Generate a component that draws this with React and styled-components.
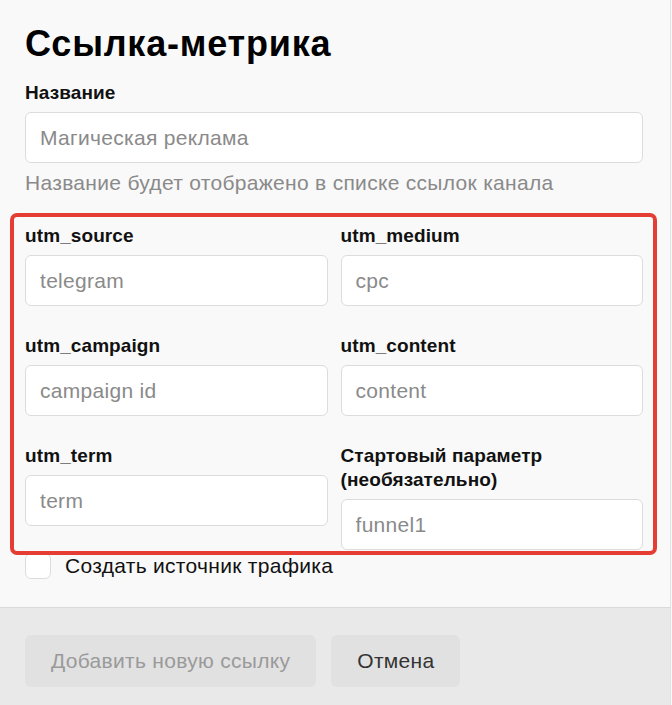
import styled, { createGlobalStyle } from "styled-components";

const GlobalStyle = createGlobalStyle`
  html, body {
    margin: 0;
    padding: 0;
    background: #f9f9f9;
  }
  body {
    font-family: "Liberation Sans", Arial, sans-serif;
    color: #111;
  }
`;

const Panel = styled.div`
  width: 671px;
  min-height: 705px;
  box-sizing: border-box;
  border-right: 1px solid #e2e2e2;
  background: #f9f9f9;
  display: flex;
  flex-direction: column;
`;

const Body = styled.div`
  padding: 23px 27px 28px 25px;
  display: flex;
  flex-direction: column;
`;

const Title = styled.h1`
  margin: 0 0 16px;
  font-size: 36px;
  line-height: 42px;
  letter-spacing: 0.8px;
  font-weight: bold;
  color: #000;
`;

const Field = styled.label`
  display: flex;
  flex-direction: column;
  min-width: 0;
`;

const Label = styled.span`
  font-size: 19px;
  line-height: 24px;
  letter-spacing: 0.1px;
  font-weight: bold;
  color: #111;
  margin-bottom: 7px;
`;

const Input = styled.input`
  height: 51px;
  box-sizing: border-box;
  width: 100%;
  border: 1px solid #dcdcdc;
  border-radius: 6px;
  background: #fff;
  padding: 0 14px;
  font-family: inherit;
  font-size: 21px;
  letter-spacing: 0.3px;
  color: #222;
  outline: none;

  &::placeholder {
    color: #8a8a8a;
  }
`;

const Hint = styled.p`
  margin: 8px 0 0;
  font-size: 21px;
  line-height: 24px;
  letter-spacing: 0.3px;
  color: #8a8a8a;
`;

const UtmGrid = styled.div`
  position: relative;
  margin-top: 29px;
  display: grid;
  grid-template-columns: 1fr 1fr;
  column-gap: 13px;
  row-gap: 28px;
  align-items: start;

  &::after {
    content: "";
    position: absolute;
    left: -15px;
    right: -14px;
    top: -11px;
    bottom: -5px;
    border: 4px solid #e53d33;
    border-radius: 7px;
    pointer-events: none;
  }
`;

const CheckRow = styled.label`
  margin-top: 3px;
  display: flex;
  align-items: center;
  gap: 14px;
  font-size: 21px;
  line-height: 26px;
  letter-spacing: 0.3px;
  color: #111;
`;

const Check = styled.span`
  width: 26px;
  height: 26px;
  box-sizing: border-box;
  border: 1px solid #dcdcdc;
  border-radius: 6px;
  background: #fff;
`;

const Footer = styled.div`
  flex: 1;
  border-top: 1px solid #dadada;
  background: #e9e9e9;
  padding: 27px 25px;
  display: flex;
  align-items: flex-start;
  gap: 15px;
`;

const Button = styled.button`
  height: 52px;
  padding: 0 26px;
  border: none;
  border-radius: 6px;
  background: #e1e1e1;
  color: ${(p) => (p.disabled ? "#9a9a9a" : "#333")};
  font-family: inherit;
  font-size: 21px;
  letter-spacing: 0.3px;
  cursor: ${(p) => (p.disabled ? "default" : "pointer")};
`;

const utmFields = [
  { label: "utm_source", placeholder: "telegram" },
  { label: "utm_medium", placeholder: "cpc" },
  { label: "utm_campaign", placeholder: "campaign id" },
  { label: "utm_content", placeholder: "content" },
  { label: "utm_term", placeholder: "term" },
  { label: "Стартовый параметр (необязательно)", placeholder: "funnel1" },
];

export default function App() {
  return (
    <>
      <GlobalStyle />
      <Panel>
        <Body>
          <Title>Ссылка-метрика</Title>
          <Field>
            <Label>Название</Label>
            <Input placeholder="Магическая реклама" />
          </Field>
          <Hint>Название будет отображено в списке ссылок канала</Hint>
          <UtmGrid>
            {utmFields.map((f) => (
              <Field key={f.label}>
                <Label>{f.label}</Label>
                <Input placeholder={f.placeholder} />
              </Field>
            ))}
          </UtmGrid>
          <CheckRow>
            <Check />
            Создать источник трафика
          </CheckRow>
        </Body>
        <Footer>
          <Button disabled>Добавить новую ссылку</Button>
          <Button>Отмена</Button>
        </Footer>
      </Panel>
    </>
  );
}
